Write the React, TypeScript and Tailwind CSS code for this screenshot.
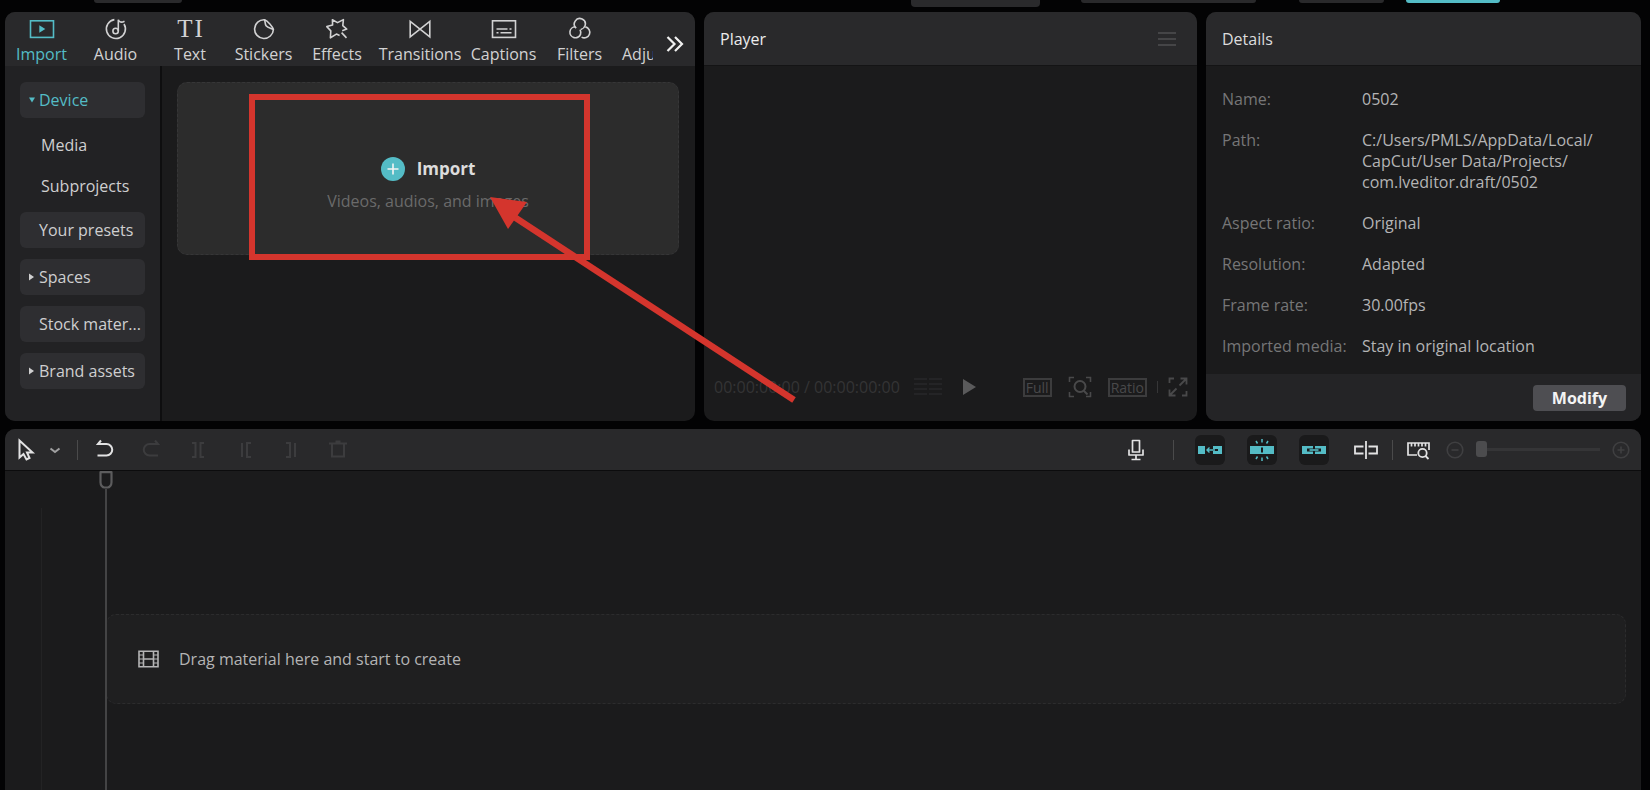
import type { ReactNode } from "react";

const stroke = {
  fill: "none",
  stroke: "currentColor",
  strokeWidth: 1.6,
} as const;

function TopIcon({ children }: { children: ReactNode }) {
  return (
    <svg width="26" height="24" viewBox="0 0 26 24" aria-hidden="true" {...stroke}>
      {children}
    </svg>
  );
}

const tabs: { label: string; width: string; icon: ReactNode }[] = [
  {
    label: "Import",
    width: "w-[73px] text-[#54bcc6]",
    icon: (
      <TopIcon>
        <rect x="1.5" y="3.8" width="23" height="16.6" />
        <path d="M10.3 8.3v7.400l6-3.700z" fill="currentColor" stroke="none" />
      </TopIcon>
    ),
  },
  {
    label: "Audio",
    width: "w-[75px]",
    icon: (
      <TopIcon>
        <path d="M11.400 2.600a9.5 9.5 0 1 0 9.600 4.400" />
        <circle cx="12.6" cy="14" r="2.7" />
        <path d="M15.3 14V2.800c.9 2.500 3.100 3.100 6.200 1.400" />
      </TopIcon>
    ),
  },
  {
    label: "Text",
    width: "w-[74px]",
    icon: (
      <span aria-hidden="true" className="flex gap-[2px] font-['Liberation_Serif',serif] text-[25px] leading-6">
        <span>T</span>
        <span>I</span>
      </span>
    ),
  },
  {
    label: "Stickers",
    width: "w-[73px]",
    icon: (
      <TopIcon>
        <path d="M13.5 2.7A9.4 9.4 0 1 0 22.4 12.5C21.8 9.8 16.6 3.6 13.5 2.7z" />
        <path d="M13.5 2.7c.9 2 .3 4.300 1.600 6 1.700 2.200 5 2.500 7.200 3.600" />
      </TopIcon>
    ),
  },
  {
    label: "Effects",
    width: "w-[74px]",
    icon: (
      <TopIcon>
        <path
          strokeLinejoin="round"
          d="M15.600 18.400l-3.200-1.300-6 3.700.4-6.900-4-4.300 5.800-1.500-.2-5.300 5.100 2.800 5.900-3-.6 6 3.900 3.500-4.500 1.600"
        />
        <path d="M17.600 15.600l4.900 5.300" />
      </TopIcon>
    ),
  },
  {
    label: "Transitions",
    width: "w-[92px]",
    icon: (
      <TopIcon>
        <path d="M3.200 4.300v15.600L22.800 4.300v15.600z" />
      </TopIcon>
    ),
  },
  {
    label: "Captions",
    width: "w-[75px]",
    icon: (
      <TopIcon>
        <rect x="1.500" y="3.800" width="23" height="16.600" />
        <path d="M5.500 12h11M18.500 12h2M5.500 15.800h2M9.500 15.800h11" />
      </TopIcon>
    ),
  },
  {
    label: "Filters",
    width: "w-[77px]",
    icon: (
      <TopIcon>
        <path d="M9.200 11.200a5.500 5.500 0 1 1 8.900-2.600c-.6 1.900-2.300 3.300-4.200 3.900" />
        <path d="M8.300 9.800a5.500 5.500 0 1 0 5.200 7.600c.5-1.700.3-3.300-.5-4.800" />
        <path d="M18.300 9.900a5.500 5.500 0 1 1-3.700 10.200" />
      </TopIcon>
    ),
  },
];

const sections = [
  { label: "Your presets", arrow: false },
  { label: "Spaces", arrow: true },
  { label: "Stock mater...", arrow: false },
  { label: "Brand assets", arrow: true },
];

const details: [string, string[]][] = [
  ["Name:", ["0502"]],
  ["Path:", ["C:/Users/PMLS/AppData/Local/", "CapCut/User Data/Projects/", "com.lveditor.draft/0502"]],
  ["Aspect ratio:", ["Original"]],
  ["Resolution:", ["Adapted"]],
  ["Frame rate:", ["30.00fps"]],
  ["Imported media:", ["Stay in original location"]],
];

function TitleBar() {
  return (
    <div className="flex h-3 items-start pl-[94px] pr-[150px]" aria-hidden="true">
      <div className="h-[3px] w-[88px] rounded-b bg-[#2a2a2c]" />
      <div className="ml-auto flex items-start">
        <div className="mr-[41px] h-[7px] w-[129px] rounded-b bg-[#2a2a2c]" />
        <div className="mr-[43px] h-[3px] w-[175px] rounded-b bg-[#29292b]" />
        <div className="mr-[22px] h-[3px] w-[85px] rounded-b bg-[#29292b]" />
        <div className="h-[3px] w-[94px] rounded-b bg-[#54bcc6]" />
      </div>
    </div>
  );
}

function Annotation() {
  return (
    <svg
      className="pointer-events-none absolute left-[71px] top-[11px] z-10"
      width="550"
      height="312"
      viewBox="0 0 550 312"
      aria-hidden="true"
    >
      <rect x="3" y="3" width="335" height="160" fill="none" stroke="#d4352d" strokeWidth="6" />
      <path d="M256 117L545 306" stroke="#d4352d" strokeWidth="6.500" />
      <path d="M241 103l37 5-19 27z" fill="#d4352d" />
    </svg>
  );
}

function MediaPanel() {
  return (
    <section className="flex min-w-0 flex-col rounded-[10px] bg-[#1b1b1c]">
      <nav className="flex h-[54px] items-start rounded-t-[10px] bg-[#29292b] pt-[5px] text-[#d2d2d3]">
        {tabs.map((t) => (
          <button key={t.label} className={"flex shrink-0 flex-col items-center gap-[3px] leading-5 " + t.width}>
            {t.icon}
            {t.label}
          </button>
        ))}
        <button className="mt-[27px] w-[35px] shrink-0 overflow-hidden pl-1 text-left leading-5">
          Adjustment
        </button>
        <button aria-label="More tabs" className="ml-auto mr-2 mt-[15px] text-[#f0f0f0]">
          <svg width="24" height="24" viewBox="0 0 24 24" {...stroke} strokeWidth={2.2} aria-hidden="true">
            <path d="M4.500 5l7 7-7 7M12 5l7 7-7 7" />
          </svg>
        </button>
      </nav>
      <div className="flex flex-1">
        <aside className="flex w-[157px] shrink-0 flex-col rounded-bl-[10px] border-r-2 border-[#0e0e0f] bg-[#222224] pl-[15px] pt-4 text-[#cfcfd0]">
          <button className="flex h-[36px] w-[125px] items-center rounded-md bg-[#2e2e31] pl-2 text-[#54bcc6]">
            <svg width="6" height="6" viewBox="0 0 6 6" className="mr-1 ml-px shrink-0" aria-hidden="true">
              <path d="M0 0.500h6L3 5.500z" fill="currentColor" />
            </svg>
            Device
          </button>
          <button className="mt-2 h-[37px] pl-[21px] text-left">Media</button>
          <button className="mt-1 h-[37px] pl-[21px] text-left">Subprojects</button>
          <div className="mt-2 flex flex-col gap-[11px]">
            {sections.map((s) => (
              <button
                key={s.label}
                className="flex h-[36px] w-[125px] items-center whitespace-nowrap rounded-md bg-[#2e2e31] pl-2"
              >
                <svg width="6" height="8" viewBox="0 0 6 8" className="mr-1 ml-px shrink-0" aria-hidden="true">
                  {s.arrow && <path d="M0 0.500v7L5 4z" fill="currentColor" />}
                </svg>
                {s.label}
              </button>
            ))}
          </div>
        </aside>
        <div className="flex-1 p-4 pl-[15px]">
          <div className="relative flex h-[173px] flex-col items-center justify-center rounded-[10px] border border-dashed border-[#363637] bg-[#2c2c2c] pt-[33px]">
            <button className="flex items-center gap-3 text-[17px] font-bold leading-6 text-[#dcdcdc]">
              <svg width="24" height="24" viewBox="0 0 24 24" aria-hidden="true">
                <circle cx="12" cy="12" r="12" fill="#54bcc6" />
                <path d="M12 6.500v11M6.500 12h11" stroke="#f4f4f4" strokeWidth="1.600" />
              </svg>
              Import
            </button>
            <p className="mt-2 text-[#6a6a6a]">Videos, audios, and images</p>
            <Annotation />
          </div>
        </div>
      </div>
    </section>
  );
}

function PlayerPanel() {
  return (
    <section className="flex min-w-0 flex-col rounded-[10px] bg-[#1b1b1c]">
      <header className="flex h-[54px] items-center justify-between rounded-t-[10px] border-b border-[#141415] bg-[#29292b] pl-4 pr-5">
        <h2 className="text-[#ececed]">Player</h2>
        <button aria-label="Player menu" className="text-[#454547]">
          <svg width="20" height="18" viewBox="0 0 20 18" {...stroke} strokeWidth={2} aria-hidden="true">
            <path d="M1 3h18M1 9h18M1 15h18" />
          </svg>
        </button>
      </header>
      <div className="mb-[21px] mt-auto flex h-[26px] items-center pl-[10px] pr-[9px] text-[#49494a]">
        <span className="whitespace-nowrap text-[#343435]">00:00:00:00 / 00:00:00:00</span>
        <svg className="ml-[13px] text-[#29292a]" width="30" height="20" viewBox="0 0 30 20" {...stroke} aria-hidden="true">
          <path d="M1 2h13M16 2h13M1 7h13M16 7h13M1 12h13M16 12h13M1 17h13M16 17h13" />
        </svg>
        <button aria-label="Play" className="ml-5 text-[#5a5a5b]">
          <svg width="13" height="16" viewBox="0 0 13 16" aria-hidden="true">
            <path d="M0 0v16l13-8z" fill="currentColor" />
          </svg>
        </button>
        <div className="ml-auto flex items-center">
          <button className="border-2 border-[#3c3c3d] px-px text-[14px] leading-[15px]">Full</button>
          <button aria-label="Zoom to fit" className="ml-4">
            <svg width="24" height="22" viewBox="0 0 24 22" {...stroke} aria-hidden="true">
              <path d="M1.500 6V1.500H6M18 1.500h4.500V6M1.500 16v4.500H6M18 20.500h4.500V16" />
              <circle cx="12" cy="10.500" r="5.500" strokeWidth="2" />
              <path d="M15.500 14.500l4 4" strokeWidth="2" />
            </svg>
          </button>
          <button className="ml-4 border-2 border-[#3c3c3d] px-px text-[14px] leading-[15px]">Ratio</button>
          <div className="ml-[10px] h-3 w-px bg-[#363637]" />
          <button aria-label="Full screen" className="ml-[10px]">
            <svg width="20" height="20" viewBox="0 0 20 20" {...stroke} strokeWidth={1.800} aria-hidden="true">
              <path d="M1.500 6V1.500H6M12.500 1.500h6v6M18.500 14v4.500H14M7.500 18.500h-6v-6M18 2l-6.500 6.500M2 18l6.500-6.500" />
            </svg>
          </button>
        </div>
      </div>
    </section>
  );
}

function DetailsPanel() {
  return (
    <section className="flex min-w-0 flex-col rounded-[10px] bg-[#1b1b1c]">
      <header className="flex h-[54px] items-center rounded-t-[10px] border-b border-[#141415] bg-[#29292b] pl-4">
        <h2 className="text-[#dcdcdd]">Details</h2>
      </header>
      <dl className="flex flex-col gap-5 pb-[17px] pl-4 pt-[23px] leading-[21px]">
        {details.map(([k, lines]) => (
          <div key={k} className="grid grid-cols-[140px_1fr]">
            <dt className="text-[#767677]">{k}</dt>
            <dd className="text-[#b4b4b5]">
              {lines.map((l) => (
                <div key={l}>{l}</div>
              ))}
            </dd>
          </div>
        ))}
      </dl>
      <footer className="mt-auto flex h-[47px] items-center justify-end rounded-b-[10px] bg-[#242426] pr-[15px]">
        <button className="h-[26px] w-[93px] rounded bg-[#4e4e52] font-bold leading-6 text-[#f4f4f4]">
          Modify
        </button>
      </footer>
    </section>
  );
}

function Tool({
  label,
  className,
  children,
}: {
  label: string;
  className?: string;
  children: ReactNode;
}) {
  return (
    <button aria-label={label} className={"shrink-0 " + (className ?? "")}>
      <svg width="24" height="24" viewBox="0 0 24 24" {...stroke} aria-hidden="true">
        {children}
      </svg>
    </button>
  );
}

function Timeline() {
  return (
    <section className="mt-2 flex flex-1 flex-col rounded-t-[10px] bg-[#1b1b1c]">
      <div className="flex h-[42px] items-center rounded-t-[10px] border-b border-[#0c0c0d] bg-[#29292b] text-[#e2e2e3]">
        <Tool label="Select" className="ml-[9px]">
          <path d="M5.500 2.500v17l4-3.500 3 5.500 3-1.500-2.500-5.500h5.500z" strokeWidth="2" />
        </Tool>
        <Tool label="Selection modes" className="ml-[5px] text-[#a0a0a1]">
          <path d="M7.500 10.500l4.500 3.500 4.500-3.500" strokeWidth="2" />
        </Tool>
        <div className="ml-[10px] mr-[15px] h-5 w-px bg-[#4a4a4b]" />
        <Tool label="Undo">
          <path d="M8 2.500L5 6h8.500a5.700 5.700 0 0 1 0 11.500H4.500" strokeWidth="2" />
        </Tool>
        <div className="flex text-[#3c3c3e]">
          <Tool label="Redo" className="ml-[22px]">
            <path d="M16 2.500L19 6h-8.500a5.700 5.700 0 0 0 0 11.500h8.500" strokeWidth="2" />
          </Tool>
          <Tool label="Split" className="ml-[23px]">
            <path d="M6 5h3.500v14H6M18 5h-3.500v14H18" strokeWidth="2" />
          </Tool>
          <Tool label="Delete left" className="ml-[23px]">
            <path d="M9 5v14M18 5h-4v14h4" strokeWidth="2" />
          </Tool>
          <Tool label="Delete right" className="ml-[23px]">
            <path d="M6 5h4v14H6M15 5v14" strokeWidth="2" />
          </Tool>
          <Tool label="Delete" className="ml-[22px]">
            <path d="M3 5.500h18M6 5.500v13h12v-13M9.500 3.500h5" strokeWidth="2" />
          </Tool>
        </div>
        <div className="ml-auto mr-2 flex items-center">
          <Tool label="Record">
            <path d="M8.500 2.500h7v11.500h-7zM5 11.500v5.500h14v-5.500M12 17v4M7.500 21.500h9" strokeWidth="1.700" strokeLinejoin="round" />
          </Tool>
          <div className="ml-[25px] mr-[21px] h-5 w-px bg-[#4a4a4b]" />
          <div className="flex gap-[22px] text-[#54bcc6]">
            <button aria-label="Main track magnet" className="flex h-[30px] w-[30px] items-center justify-center rounded-md bg-[#1a1a1b]">
              <svg width="24" height="24" viewBox="0 0 24 24" aria-hidden="true" fill="currentColor">
                <path d="M0 8h7v8H0zM15 8h9v8h-9v-3h5v-2h-5z" />
                <path d="M17 12H9M11.500 9.500L9 12l2.500 2.500" fill="none" stroke="currentColor" strokeWidth="1.400" />
              </svg>
            </button>
            <button aria-label="Auto snapping" className="flex h-[30px] w-[30px] items-center justify-center rounded-md bg-[#1a1a1b]">
              <svg width="24" height="24" viewBox="0 0 24 24" aria-hidden="true" fill="currentColor">
                <path d="M0 8h11v8H0zM13 8h11v8H13zM11 8h2v1.500h-2zM11 14.500h2V16h-2z" />
                <path d="M12 1v3.500M12 19.500V23M6 3l1.500 2.500M18 3l-1.500 2.500M6 21l1.500-2.500M18 21l-1.500-2.500" stroke="currentColor" strokeWidth="1.500" />
              </svg>
            </button>
            <button aria-label="Linkage" className="flex h-[30px] w-[30px] items-center justify-center rounded-md bg-[#1a1a1b]">
              <svg width="24" height="24" viewBox="0 0 24 24" aria-hidden="true" fill="currentColor">
                <path d="M0 8h11v2.500H5v3h6V16H0zM13 8h11v8H13v-2.500h6v-3h-6z" />
                <path d="M7.500 12h9" stroke="currentColor" strokeWidth="1.600" />
              </svg>
            </button>
          </div>
          <Tool label="Preview axis" className="ml-[25px]">
            <path d="M9.500 8.500H1v7h8.500M14.500 8.500H23v7h-8.500M12 3v18" strokeWidth="1.800" />
          </Tool>
          <div className="ml-[14px] mr-[13px] h-5 w-px bg-[#4a4a4b]" />
          <Tool label="Timeline scale">
            <path d="M11 17H2V5h21v7M5.500 5v3.500M9 5v3.500M12.500 5v3.500M16 5v3.500M19.500 5v3.500" strokeWidth="1.700" />
            <circle cx="16.500" cy="15" r="4.200" strokeWidth="1.800" />
            <path d="M19.500 18l3 3" strokeWidth="1.800" />
          </Tool>
          <Tool label="Zoom out" className="ml-[13px] text-[#3f3f41]">
            <circle cx="12" cy="12" r="7.800" />
            <path d="M8.500 12h7" />
          </Tool>
          <input
            type="range"
            aria-label="Timeline zoom"
            min={0}
            max={100}
            defaultValue={0}
            className="ml-[9px] mr-[9px] h-4 w-[124px] appearance-none bg-transparent [&::-webkit-slider-runnable-track]:h-[3px] [&::-webkit-slider-runnable-track]:bg-[#353537] [&::-webkit-slider-thumb]:-mt-[7px] [&::-webkit-slider-thumb]:h-4 [&::-webkit-slider-thumb]:w-[11px] [&::-webkit-slider-thumb]:appearance-none [&::-webkit-slider-thumb]:rounded-[3px] [&::-webkit-slider-thumb]:bg-[#4c4c4e]"
          />
          <Tool label="Zoom in" className="text-[#3f3f41]">
            <circle cx="12" cy="12" r="7.800" />
            <path d="M8.500 12h7M12 8.500v7" />
          </Tool>
        </div>
      </div>
      <div className="flex flex-1">
        <div className="mt-[37px] w-[37px] shrink-0 border-r border-[#232324]" />
        <div className="relative ml-[64px] flex-1 pr-[15px] pt-[143px]">
          <div className="flex h-[90px] items-center gap-5 rounded-[10px] border border-dashed border-[#2c2c2d] bg-[#1f1f20] pl-[31px] text-[#b4b4b5]">
            <svg width="21" height="18" viewBox="0 0 21 18" {...stroke} aria-hidden="true">
              <path d="M1 1.200h19v15.600H1zM5.500 1v16M15.500 1v16M5.500 9h10" />
              <path d="M1 5h4.500M1 9h4.500M1 13h4.500M15.500 5H20M15.500 9H20M15.500 13H20" strokeWidth="1.200" />
            </svg>
            Drag material here and start to create
          </div>
          <div className="absolute -left-[7px] bottom-0 top-0 flex w-[14px] flex-col items-center text-[#5c5c5d]">
            <svg width="14" height="18" viewBox="0 0 14 18" {...stroke} strokeWidth={2.200} aria-hidden="true">
              <path d="M1.500 1.200h11v10c0 3-2 5.300-4 5.300h-3c-2 0-4-2.300-4-5.300z" strokeLinejoin="round" />
            </svg>
            <div className="w-[2px] flex-1 bg-[#444445]" />
          </div>
        </div>
      </div>
    </section>
  );
}

export default function App() {
  return (
    <main className="flex min-h-screen flex-col bg-[#030304] pl-[5px] pr-[9px] font-['Open_Sans','Noto_Sans',sans-serif] text-[16px]">
      <div className="-ml-[5px] -mr-[9px]">
        <TitleBar />
      </div>
      <div className="grid grid-cols-[690fr_493fr_435fr] gap-[9px]">
        <MediaPanel />
        <PlayerPanel />
        <DetailsPanel />
      </div>
      <Timeline />
    </main>
  );
}
